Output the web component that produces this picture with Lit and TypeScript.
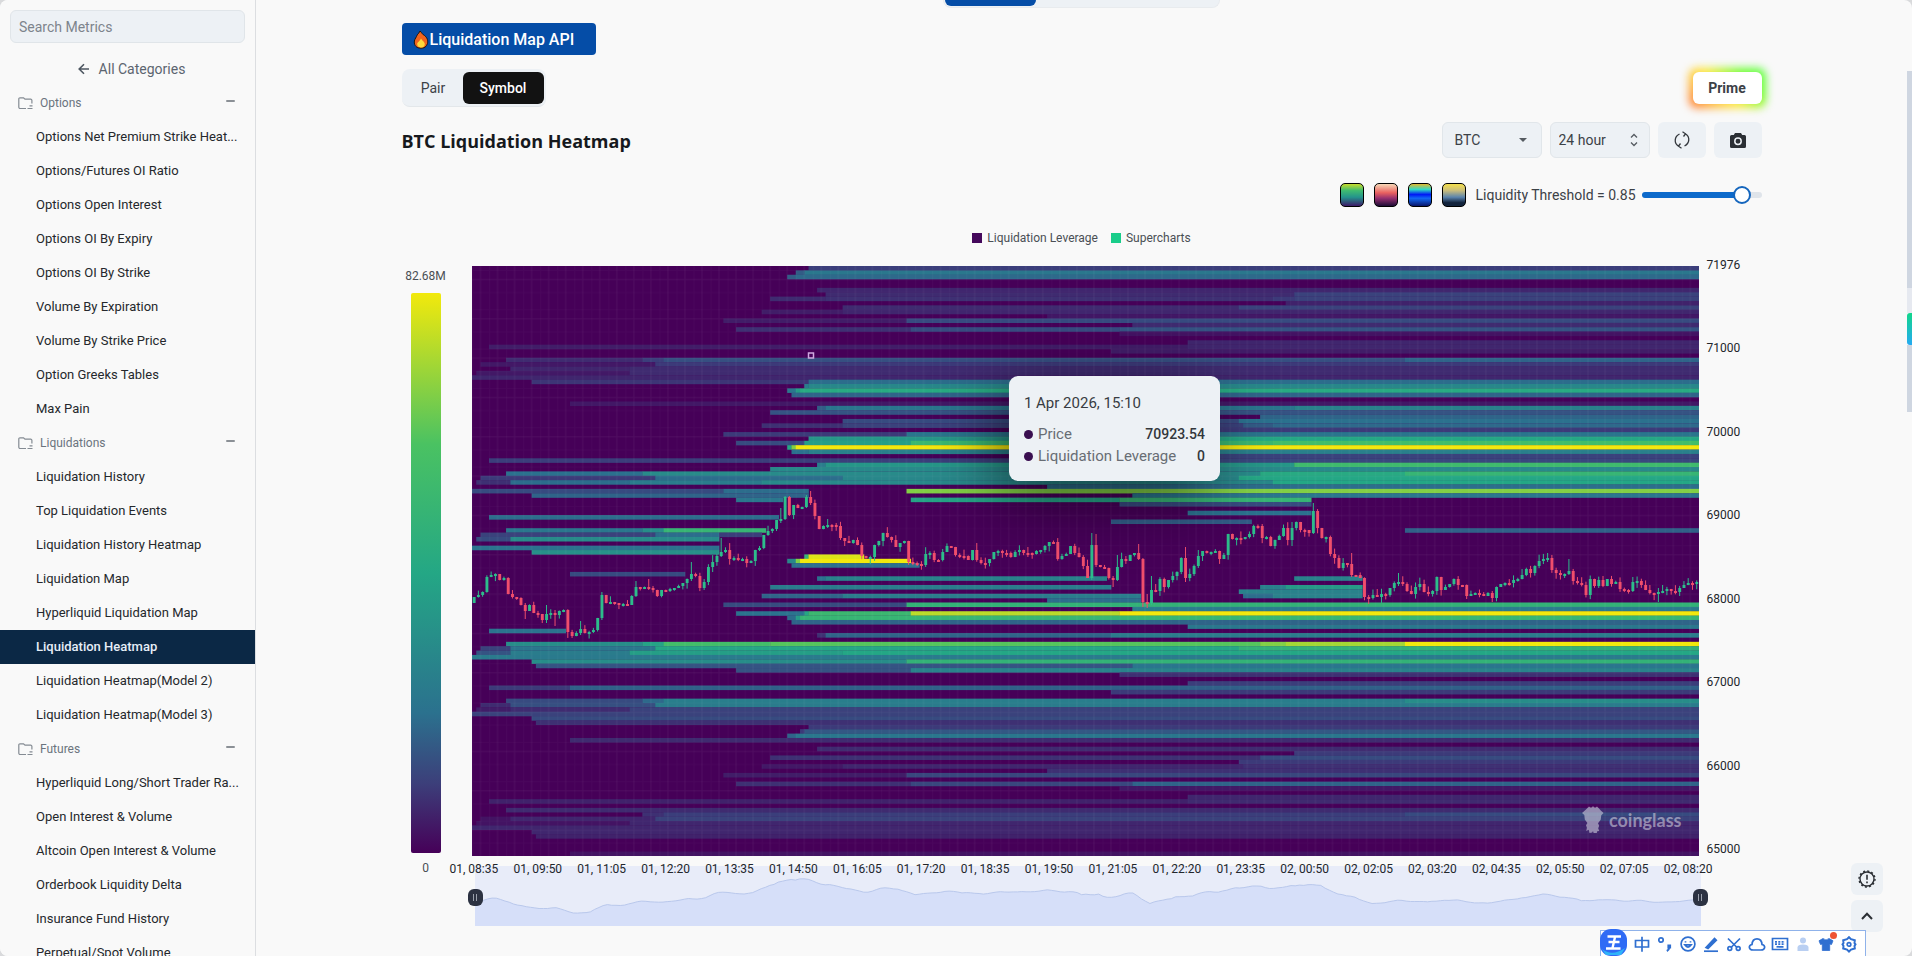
import { LitElement, html, svg, css } from 'lit';
import { customElement, property, state } from 'lit/decorators.js';
import { classMap } from 'lit/directives/class-map.js';

const COLS = 288;
const CELL_W = 4.26;
const CELL_H = 4.37;
const PLOT_W = 1227;
const PLOT_H = 590;

const SCALE: Array<[number, number[]]> = [
  [0, [70, 0, 88]],
  [12.5, [60, 60, 122]],
  [25, [43, 113, 142]],
  [50, [36, 167, 133]],
  [70, [74, 194, 98]],
  [100, [242, 233, 12]],
];

function heat(v: number): string {
  for (let i = 1; i < SCALE.length; i++) {
    const [hi, b] = SCALE[i];
    const [lo, a] = SCALE[i - 1];
    if (v <= hi) {
      const t = (v - lo) / (hi - lo);
      return `rgb(${a.map((n, k) => Math.round(n + (b[k] - n) * t)).join(',')})`;
    }
  }
  return 'rgb(242,233,12)';
}

/* One line per price row: "row: column value, column value"; a value lasts until the next column. */
const LEVELS = `
0: 79 13
1: 76 20, 78 28
2: 74 20, 76 23
5: 81 8
6: 83 9, 193 14
7: 70 9, 83 10, 188 12, 193 14
8: 191 7
9: 87 9, 180 14
10: 68 6, 87 8
11: 135 5
12: 59 6, 102 16
13: 155 9
14: 62 10, 103 16, 152 18
15: 152 4
17: 168 8
18: 4 6, 168 8
19: 150 6
21: 8 9, 40 13, 45 17, 219 22
22: 2 5, 43 12
23: 9 8, 37 9
24: 1 5, 37 9
25: 0 8
26: 14 11, 79 24
27: 78 30, 79 35
28: 74 28, 76 45, 77 52
29: 75 22
31: 23 5
32: 81 20, 83 27, 193 32
33: 70 18
34: 185 22
35: 87 16, 180 25
36: 68 10, 87 14, 181 20, 188 23
37: 135 12
38: 59 12, 102 27
39: 79 42, 135 50
40: 62 16, 78 46, 103 62, 188 66
41: 74 50, 75 80, 76 100
42: 75 25, 79 32
43: 150 14
44: 4 13, 150 15
45: 81 30, 83 42, 193 64
46: 70 36
47: 8 25, 40 37, 185 52, 219 60
48: 2 12, 43 24, 87 35, 180 50
49: 1 10, 9 24, 37 30, 68 36, 188 50
50: 135 24
51: 0 16, 59 24, 79 0, 102 80
52: 14 22, 79 0, 155 28
53: 62 28, 73 0, 103 48, 152 60, 197 0
54: 152 16, 197 0
56: 168 25, 197 0
57: 4 24, 72 0
58: 150 20, 183 0
60: 8 28, 40 38, 45 60, 69 0, 219 21
61: 2 14, 43 24, 58 13, 68 0
62: 1 16, 9 37, 58 0
64: 0 26, 58 0
65: 14 40, 58 0
66: 78 60, 79 96, 92 0
67: 74 35, 76 80, 77 100, 103 0
68: 75 25, 105 0
70: 23 16, 50 0
71: 81 25, 83 33, 149 0, 193 33, 209 0
73: 70 30, 150 0, 185 32, 191 44, 209 0
74: 180 33, 209 0
75: 68 22, 87 30, 157 0, 181 24, 188 33, 209 0
76: 135 24, 157 0
77: 59 16, 102 58
78: 155 30
79: 62 26, 78 50, 79 62, 103 90, 152 100
80: 74 24, 76 45, 77 60
81: 75 22
82: 168 28
83: 4 26, 22 0
84: 81 10, 83 22, 150 30
86: 8 38, 40 48, 45 66, 70 72, 185 80, 191 86, 219 100
87: 2 14, 9 28, 43 50, 180 58
88: 1 18, 9 30, 37 46, 87 50
89: 0 29
90: 14 38, 102 58
91: 15 18, 155 27
92: 62 18, 103 33
93: 152 10
95: 168 13
96: 4 12, 23 21
97: 150 12
99: 8 16, 40 23, 45 31, 219 38
100: 2 9, 9 17, 43 30
101: 1 6, 9 9, 37 14
102: 0 14
103: 14 16
104: 15 10
105: 79 12
106: 77 12, 78 19
107: 74 22, 76 28
108: 23 9
110: 81 9
111: 193 12
112: 70 10, 185 16
113: 180 12
114: 68 5, 87 8, 181 10
115: 135 10
116: 59 6, 102 15
118: 62 10, 103 15, 155 22
119: 152 5
121: 168 8
122: 4 7, 168 9
124: 8 9
125: 40 10, 45 13, 219 16
126: 2 4, 9 8, 43 14
127: 1 4, 37 8
128: 0 8
129: 14 8
130: 15 7
134: 23 4`;

const BANDS = LEVELS.trim().split('\n').flatMap((line) => {
  const [row, rest] = line.split(':');
  const stops = rest.split(',').map((p) => p.trim().split(' ').map(Number));
  return stops
    .map(([col, value], i) => ({ row: Number(row), col, value, end: i + 1 < stops.length ? stops[i + 1][0] : COLS }))
    .filter((b) => b.value > 0);
});

const CLOSES = [
  331, 329, 326, 311, 309, 308, 314, 312, 328, 331, 332, 339, 345, 339, 347, 348, 354, 348, 347, 349, 345, 344, 366, 370, 367,
  363, 367, 366, 364, 352, 329, 337, 336, 337, 339, 338, 339, 330, 321, 323, 321, 322, 324, 330, 324, 325, 323, 322, 320, 317,
  313, 308, 310, 322, 316, 301, 296, 290, 286, 284, 293, 292, 294, 293, 297, 295, 284, 282, 269, 265, 263, 254, 253, 231, 249,
  239, 242, 241, 231, 237, 250, 263, 260, 259, 259, 260, 272, 275, 277, 274, 279, 290, 292, 291, 279, 275, 267, 271, 274, 281,
  277, 275, 296, 297, 298, 299, 288, 287, 294, 294, 286, 280, 281, 289, 290, 290, 294, 284, 294, 297, 297, 293, 286, 285, 287,
  287, 291, 286, 284, 287, 287, 288, 285, 284, 280, 276, 276, 293, 290, 288, 280, 287, 291, 300, 312, 279, 299, 301, 302, 312,
  314, 301, 293, 295, 289, 287, 293, 336, 337, 324, 325, 313, 321, 314, 310, 306, 292, 312, 308, 300, 290, 285, 287, 286, 285,
  293, 289, 268, 273, 272, 273, 271, 268, 260, 260, 272, 271, 280, 274, 270, 262, 274, 262, 256, 264, 264, 267, 245, 262, 272,
  271, 288, 292, 302, 297, 298, 309, 309, 312, 331, 332, 329, 331, 328, 329, 322, 317, 316, 318, 325, 328, 321, 318, 326, 328,
  325, 311, 324, 321, 318, 313, 319, 319, 330, 328, 327, 328, 330, 327, 332, 321, 318, 317, 317, 314, 313, 309, 303, 307, 300,
  295, 293, 292, 304, 307, 309, 308, 305, 315, 317, 319, 329, 313, 320, 314, 320, 313, 318, 316, 323, 324, 325, 316, 315, 319,
  324, 327, 327, 326, 325, 323, 325, 326, 322, 319, 317, 317, 316,
];

/* Long wicks: index -> [above the body, below the body]. */
const SPIKES: Record<number, [number, number]> = {
  12: [2, 8], 17: [9, 3], 19: [3, 11], 25: [8, 2], 30: [3, 2], 38: [6, 1], 41: [8, 1], 51: [12, 2], 58: [14, 1], 67: [2, 1],
  72: [11, 2], 73: [1, 1], 74: [1, 1], 78: [2, 1], 79: [6, 2], 83: [6, 1], 145: [12, 2], 146: [11, 2], 151: [12, 1], 156: [9, 1],
  157: [1, 5], 158: [8, 4], 159: [14, 2], 167: [11, 4], 170: [6, 2], 197: [8, 1], 206: [11, 2], 210: [2, 5], 217: [9, 2],
  239: [2, 4], 252: [5, 2], 257: [12, 1], 272: [5, 1], 278: [4, 8], 150: [2, 7], 192: [6, 6], 54: [3, 2],
};

const CANDLES = CLOSES.map((close, i) => {
  const open = i ? CLOSES[i - 1] : 337;
  const top = Math.min(open, close);
  const bottom = Math.max(open, close, top + 2);
  const noise = (k: number) => Math.abs(Math.sin(i * k) * 43758.5) % 1;
  const [up, down] = SPIKES[i] ?? [noise(12.9) ** 2 * 7, noise(78.2) ** 2 * 6];
  return { x: i * CELL_W, top, bottom, up, down, rise: close < open };
});

const AREA = (() => {
  const pts = CLOSES.map((_, i) => {
    const win = CLOSES.slice(Math.max(0, i - 1), i + 3);
    const mean = win.reduce((a, b) => a + b, 0) / win.length;
    return `${(i * 1226) / 287},${(11 + (mean - 231) * 0.266).toFixed(1)}`;
  });
  return pts.join(' L');
})();

const PRICES = ['71976', '71000', '70000', '69000', '68000', '67000', '66000', '65000'];
const TIMES = [
  '01, 08:35', '01, 09:50', '01, 11:05', '01, 12:20', '01, 13:35', '01, 14:50', '01, 16:05', '01, 17:20', '01, 18:35', '01, 19:50',
  '01, 21:05', '01, 22:20', '01, 23:35', '02, 00:50', '02, 02:05', '02, 03:20', '02, 04:35', '02, 05:50', '02, 07:05', '02, 08:20',
];

const GROUPS = [
  {
    name: 'Options',
    items: [
      'Options Net Premium Strike Heat...', 'Options/Futures OI Ratio', 'Options Open Interest', 'Options OI By Expiry',
      'Options OI By Strike', 'Volume By Expiration', 'Volume By Strike Price', 'Option Greeks Tables', 'Max Pain',
    ],
  },
  {
    name: 'Liquidations',
    items: [
      'Liquidation History', 'Top Liquidation Events', 'Liquidation History Heatmap', 'Liquidation Map',
      'Hyperliquid Liquidation Map', 'Liquidation Heatmap', 'Liquidation Heatmap(Model 2)', 'Liquidation Heatmap(Model 3)',
    ],
  },
  {
    name: 'Futures',
    items: [
      'Hyperliquid Long/Short Trader Ra...', 'Open Interest & Volume', 'Altcoin Open Interest & Volume', 'Orderbook Liquidity Delta',
      'Insurance Fund History', 'Perpetual/Spot Volume',
    ],
  },
];

const base = css`
  * { box-sizing: border-box; }
  button, input, select { font: inherit; color: inherit; margin: 0; }
  button { border: 0; padding: 0; background: none; cursor: pointer; }
  a { color: inherit; text-decoration: none; }
  svg { display: block; }
`;

@customElement('metric-sidebar')
export class MetricSidebar extends LitElement {
  @property() active = '';

  static styles = [base, css`
    :host { display: block; padding-top: 10px; background: #f9f9f9; border-right: 1px solid #dcdee1; overflow: hidden; color: #25282c; font-size: 13px; }
    .search { display: block; width: calc(100% - 20px); height: 33px; margin: 0 10px 9px; padding: 0 8px; border: 1px solid #e0e5e9; border-radius: 6px; background: #edf1f5; font-size: 14px; }
    .search::placeholder { color: #7d848c; opacity: 1; }
    .all { display: flex; align-items: center; justify-content: center; gap: 9px; width: 100%; height: 34px; padding-left: 8px; color: #5c6570; font-size: 14px; }
    .group { display: flex; align-items: center; gap: 7px; width: 100%; height: 34px; padding: 0 20px 0 18px; color: #6b747e; font-size: 12px; text-align: left; }
    .group span { flex: 1; }
    .list { margin: 0; padding: 0; list-style: none; }
    .link { display: block; height: 34px; padding: 0 12px 0 36px; line-height: 34px; white-space: nowrap; overflow: hidden; }
    .active { background: #0b2845; color: #e6eef8; font-weight: 500; }
  `];

  render() {
    return html`
      <input class="search" type="search" placeholder="Search Metrics" aria-label="Search Metrics" />
      <button class="all">
        <svg width="12" height="12" viewBox="0 0 12 12" fill="none" stroke="#4d5660" stroke-width="1.6"><path d="M11 6H1.5M6 1.2 1.2 6 6 10.8" /></svg>
        All Categories
      </button>
      ${GROUPS.map((g) => html`
        <button class="group">
          <svg width="15" height="13" viewBox="0 0 15 13" fill="none" stroke="#848b93" stroke-width="1.2"><path d="M8 11.5H2.200A1.400 1.400 0 0 1 .8 10V2A1.200 1.200 0 0 1 2 .8h3.500L7 2.200h5.700A1.200 1.200 0 0 1 13.900 3.400V6.500M11.500 8.800H14.500M9.500 11.500H14.500" /></svg>
          <span>${g.name}</span>
          <svg width="10" height="8" viewBox="0 0 10 8"><rect x="1" y="1" width="9" height="2" rx="1" fill="#8b9096" /></svg>
        </button>
        <ul class="list">
          ${g.items.map((t) => html`<li><a href="#" class=${classMap({ link: true, active: t === this.active })}>${t}</a></li>`)}
        </ul>`)}
    `;
  }
}

@customElement('heatmap-chart')
export class HeatmapChart extends LitElement {
  static styles = [base, css`
    :host { display: block; color: #22262b; font-size: 12px; }
    .legend { display: flex; justify-content: center; gap: 13px; height: 16px; line-height: 16px; color: #4a4f55; }
    .key { display: flex; align-items: center; gap: 5px; }
    .swatch { width: 10px; height: 10px; background: #45095c; }
    .swatch.green { background: #19cd8a; }
    .grid { display: grid; grid-template-columns: 70px minmax(0, 1fr) 63px; margin-top: 20px; }
    .scale { display: flex; flex-direction: column; align-items: center; grid-row: 1 / 3; padding: 2px 22px 0 0; color: #4a4f55; line-height: 16px; }
    .bar { width: 30px; height: 560px; margin: 9px 0 7px; border-radius: 2px; background: linear-gradient(to top, #460058, #3c3f7a 12.5%, #2b718e 25%, #24a785 50%, #4ac262 73%, #f2e90c); }
    .plot { position: relative; height: 590px; background: #460058; }
    .canvas { width: 100%; height: 100%; }
    .prices { display: flex; flex-direction: column; justify-content: space-between; height: 600px; margin-top: -9px; padding-left: 8px; line-height: 16px; grid-row: 1 / 3; grid-column: 3; }
    .range { display: grid; grid-column: 2; margin: 10px -2px 0 3px; height: 60px; }
    .area, .times, .handles { grid-area: 1 / 1; }
    .area { width: 100%; height: 60px; }
    .times { display: flex; justify-content: space-between; margin: -5px -12px 0 -25px; height: 16px; line-height: 16px; white-space: nowrap; z-index: 1; }
    .handles { display: flex; justify-content: space-between; align-items: flex-end; margin: 0 -7px 20px; }
    .handle { display: flex; align-items: center; justify-content: center; gap: 2px; width: 15px; height: 17px; border-radius: 6px; background: #2c3242; }
    .handle::before, .handle::after { content: ''; width: 1px; height: 7px; background: #9ba1ad; }
    .tip { position: absolute; left: 43.8%; top: 110px; width: 211px; height: 105px; padding: 17px 15px; border-radius: 9px; background: #edf1f5; box-shadow: -12px 16px 64px rgba(0, 0, 0, 0.55); color: #383c42; font-size: 15px; line-height: 22px; }
    .when { margin-bottom: 10px; line-height: 20px; }
    .row { display: flex; align-items: center; gap: 5px; color: #686d74; }
    .row b { margin-left: auto; color: #33373c; font-size: 14px; font-weight: 500; }
    .dot { width: 9px; height: 9px; border-radius: 50%; background: #3a0f50; }
    .mark { position: absolute; right: 17px; bottom: 23px; display: flex; align-items: center; gap: 5px; color: rgba(205, 205, 220, 0.6); font: 700 18px/26px Lato, sans-serif; }
  `];

  render() {
    return html`
      <div class="legend">
        <span class="key"><i class="swatch"></i>Liquidation Leverage</span>
        <span class="key"><i class="swatch green"></i>Supercharts</span>
      </div>
      <div class="grid">
        <div class="scale"><span>82.68M</span><div class="bar"></div><span>0</span></div>
        <div class="plot">
          <svg class="canvas" viewBox="0 0 ${PLOT_W} ${PLOT_H}" preserveAspectRatio="none" role="img" aria-label="BTC Liquidation Heatmap">
            <defs>
              <pattern id="cells" width="17.040" height="39.330" patternUnits="userSpaceOnUse">
                <path d="M8.500 0V39.330M0 13.500H17.040" stroke="#fff" stroke-opacity=".05" />
                <path d="M0.500 0V39.330M0 4.500H17.040M0 26.500H17.040" stroke="#fff" stroke-opacity=".025" />
              </pattern>
            </defs>
            ${BANDS.map((b) => svg`<rect x=${b.col * CELL_W} y=${b.row * CELL_H} width=${(b.end - b.col) * CELL_W + 0.3} height=${CELL_H + 0.2} fill=${heat(b.value)} />`)}
            <rect width=${PLOT_W} height=${PLOT_H} fill="url(#cells)" />
            ${CANDLES.map((c) => svg`
              <path d="M${c.x + 2.1} ${c.top - c.up}V${c.bottom + c.down}" stroke=${c.rise ? '#2dbd8b' : '#f04e6c'} stroke-width="1" />
              <rect x=${c.x + 0.7} y=${c.top} width="2.9" height=${c.bottom - c.top} fill=${c.rise ? '#2dbd8b' : '#f04e6c'} />`)}
            <rect x="336.500" y="87" width="5" height="5" fill="none" stroke="#cfa8e0" stroke-width="1.500" />
          </svg>
          <div class="mark">
            <svg width="22" height="27" viewBox="0 0 22 27" fill="currentColor"><path d="M5 2.500 7 .5l2 1.200L11 .3l2 1.400 2-1.200 2 2 2 2.300 2.600 2.200-2.300 2.200-.6 4.500-2.700 3.600 1.200 2.500-1 2.400 1 2.800-2 .3-.8 3.200-2.600-.8L11 25l-.8 1.500-2.700.5-.8-3.200-2.500 1.200.7-3.200-.9-2.600 1.400-2.200L2.800 13.500 2.300 9 0 7l2.600-2.200z" /></svg>
            <span>coinglass</span>
          </div>
          <div class="tip" role="tooltip">
            <div class="when">1 Apr 2026, 15:10</div>
            <div class="row"><i class="dot"></i>Price<b>70923.54</b></div>
            <div class="row"><i class="dot"></i>Liquidation Leverage<b>0</b></div>
          </div>
        </div>
        <div class="prices">${PRICES.map((p) => html`<span>${p}</span>`)}</div>
        <div class="range">
          <svg class="area" viewBox="0 0 1226 60" preserveAspectRatio="none">
            <rect width="1226" height="60" fill="#e8ecf9" />
            <path d="M${AREA} V60 H0 Z" fill="#d6dff9" />
            <path d="M${AREA}" fill="none" stroke="#b9c8ec" />
          </svg>
          <div class="handles"><i class="handle"></i><i class="handle"></i></div>
          <div class="times">${TIMES.map((t) => html`<span>${t}</span>`)}</div>
        </div>
      </div>
    `;
  }
}

const IME_ICONS = [
  svg`<path d="M1.500 4.500h13v6.500H1.500zM8 .8v15" />`,
  svg`<circle cx="4" cy="4" r="2.200" /><path d="M12 10.500v1.500q0 2-2.200 3M11.500 9.500h1.500v2h-1.500z" stroke-width="2.200" />`,
  svg`<circle cx="8" cy="8" r="6.900" /><path d="M4.800 8.800q3.200 4.500 6.400 0zM5.500 5.300v1.200M10.500 5.300v1.200" />`,
  svg`<path d="M3 11.500 11.500 2.500l1.800 1.800L5 12.500z" fill="currentColor" /><path d="M1 15.200h14" />`,
  svg`<path d="M2 2.500 11 11.500M14 2.500 5 11.500" /><circle cx="3.800" cy="12.500" r="1.900" /><circle cx="12.200" cy="12.500" r="1.900" />`,
  svg`<path d="M4 14C-.3 14-1 9.500 3 8.500 3.500 1 12.500 1 13 8.500 17 9.500 16.300 14 12 14z" />`,
  svg`<path d="M.5 2.500h15v11H.5z" /><path d="M3 5.800h10M3 8.200h10" stroke-dasharray="2 1.300" /><path d="M4.500 10.800h7" />`,
  svg`<g fill="#b9cff2" stroke="none"><circle cx="8" cy="4.500" r="3" /><path d="M2.500 15V11.500Q2.500 8.500 8 8.500t5.500 3V15z" /></g>`,
  svg`<path d="M5 2.500 1 4.800 2.500 8.500 4.300 8V14.500h7.400V8l1.800.5L15 4.800 11 2.500Q8 5.500 5 2.500z" fill="currentColor" stroke-width=".8" />`,
  svg`<path d="M8 1.200 10 3.200 13.800 4.300 13.500 7 14.500 8.400 13.500 10 13.800 12.500 10 13.600 8 15.600 6 13.600 2.200 12.500 2.500 10 1.500 8.400 2.500 7 2.200 4.300 6 3.200z" stroke-width="2" /><circle cx="8" cy="8.400" r="1.800" />`,
];

@customElement('app-root')
export class AppRoot extends LitElement {
  @state() private threshold = 0.85;

  static styles = [base, css`
    :host { display: block; height: 100vh; background: #d9dadc; color: #3c4147; font-family: Roboto, "Liberation Sans", sans-serif; overflow: hidden; }
    .shell { position: relative; display: grid; grid-template-columns: 256px minmax(0, 1fr) 5px; height: 100%; border-radius: 8px; background: #f9f9f9; overflow: hidden; }
    .main { padding: 0 24px; overflow: hidden; }
    .page { max-width: 1360px; margin: 0 auto; }
    .strip { width: 277px; height: 8px; margin: 0 auto; padding: 0 1px; border: 1px solid #e8ebee; border-top: 0; border-radius: 0 0 8px 8px; background: #edf1f5; }
    .tab { display: block; width: 91px; height: 6px; border-radius: 0 0 6px 6px; background: #054da7; }
    .api { display: flex; align-items: center; width: 194px; height: 32px; margin-top: 15px; padding-left: 11px; gap: 1px; border-radius: 4px; background: #054da7; color: #fff; font-size: 16px; font-weight: 500; }
    .bar { display: flex; align-items: center; justify-content: space-between; }
    .modes { position: relative; z-index: 0; margin-top: 14px; }
    .segment { display: flex; align-items: center; height: 38px; padding: 0 2px; border-radius: 8px; background: #edf1f5; border-bottom: 1px solid #e3e7ea; font-size: 14px; }
    .seg { width: 59px; height: 32px; }
    .seg.on { width: 81px; border-radius: 6px; background: #121212; color: #fff; font-weight: 500; }
    .prime { width: 69px; height: 32px; border-radius: 6px; background: #fff; font-size: 14px; font-weight: 700; position: relative; }
    .prime::before { content: ''; position: absolute; inset: -4px; z-index: -1; border-radius: 8px; background: linear-gradient(45deg, #ff6a2c, #ffc83a 30%, #ffe93a 45%, #6bff2c 75%, #5dff4a); filter: blur(4px); }
    .head { margin-top: 15px; }
    h1 { margin: 0; padding-top: 2px; color: #16191d; font: 700 18px/34px "Open Sans", "Noto Sans", sans-serif; }
    .tools { display: flex; gap: 8px; font-size: 14px; }
    .pick { display: grid; width: 100px; height: 36px; align-items: center; }
    .pick select { grid-area: 1 / 1; width: 100%; height: 100%; padding: 0 12px; border: 1px solid #e1e6ea; border-radius: 6px; background: #edf1f5; appearance: none; }
    .pick .narrow { padding: 0 8px; }
    .pick svg { grid-area: 1 / 1; justify-self: end; margin-right: 12px; pointer-events: none; }
    .square { display: flex; align-items: center; justify-content: center; width: 48px; height: 36px; border-radius: 6px; background: #edf1f5; }
    .options { display: flex; align-items: center; justify-content: flex-end; gap: 10px; height: 24px; margin-top: 25px; font-size: 14px; }
    .theme { width: 24px; height: 24px; border: 1px solid #000; border-radius: 5px; }
    .viridis { background: linear-gradient(#c9dc2c, #3fbb70 30%, #24948c 60%, #3d1a68); }
    .magma { background: linear-gradient(#f7d9b8, #e9605f 40%, #96306f 65%, #1d0c35); }
    .jet { background: linear-gradient(#e6b92e, #2fd9c8 25%, #0018f5 48%, #1168f5 65%, #08156a); }
    .cividis { background: linear-gradient(#f5e04c, #c9bd7c 30%, #5b84ad 60%, #12233c 85%); }
    .track { width: 120px; height: 6px; border-radius: 3px; margin-left: -4px; background: linear-gradient(to right, #0d6acb 85%, #dfe4ea 85%); }
    .slide { display: block; width: 136px; height: 18px; margin: -6px -9px; appearance: none; background: none; }
    .slide::-webkit-slider-thumb { appearance: none; width: 18px; height: 18px; border: 2px solid #1566bd; border-radius: 50%; background: #fff; }
    heatmap-chart { margin-top: 23px; }
    .rail { display: flex; flex-direction: column; }
    .thumb { margin-top: 71px; height: 242px; background: linear-gradient(#cfd6e1 217px, #e6e9f0 217px); }
    .widget { height: 32px; border-radius: 3px 0 0 3px; background: linear-gradient(#12d68a, #25aaf2); }
    .thumb-end { height: 67px; background: #cfd6e1; }
    .float { position: absolute; right: 29px; bottom: 24px; display: grid; gap: 5px; }
    .float button { display: flex; align-items: center; justify-content: center; width: 32px; height: 32px; border-radius: 6px; background: #edf1f5; }
    .ime { position: absolute; right: 46px; bottom: 0; display: flex; align-items: center; gap: 7px; height: 26px; padding: 0 8px 0 33px; border: 1px solid #8fb2ea; border-bottom: 0; background: #fff; color: #2f6fd0; }
    .ime svg { overflow: visible; }
    .ime-logo { position: absolute; left: -1px; bottom: 0; }
    .dot { position: absolute; right: 28px; top: 1px; width: 7px; height: 7px; border-radius: 50%; background: #ee5433; }
  `];

  render() {
    return html`
      <div class="shell">
        <metric-sidebar active="Liquidation Heatmap"></metric-sidebar>
        <main class="main">
          <div class="page">
            <div class="strip"><i class="tab"></i></div>
            <a class="api" href="#">
              <svg width="16" height="19" viewBox="0 0 16 19"><path d="M7 1C9 3 9.500 4.500 11.500 5.500 14.500 8 15 10.500 14.500 13.500 13.500 17 11 18.200 8 18.200S2 17 1.300 13C1 10 2.500 8.500 3.500 6.500 4 5.500 4.500 4 5.500 3.500z" fill="#f0641e" stroke="#1a1410" /><path d="M8 8.500C9 11 12 11.500 11.800 14.500 11.500 17 9.500 17.500 8 17.500S4.300 16.800 4.200 14C4.200 12 6.800 11.500 8 8.500z" fill="#ffd93b" /></svg>
              <span>Liquidation Map API</span>
            </a>
            <div class="bar modes">
              <div class="segment"><button class="seg">Pair</button><button class="seg on">Symbol</button></div>
              <button class="prime">Prime</button>
            </div>
            <div class="bar head">
              <h1>BTC Liquidation Heatmap</h1>
              <div class="tools">
                <div class="pick">
                  <select aria-label="Coin"><option>BTC</option></select>
                  <svg width="14" height="6" viewBox="0 0 14 6"><path d="M3 1h8L7 5z" fill="#555b61" /></svg>
                </div>
                <div class="pick">
                  <select class="narrow" aria-label="Time range"><option>24 hour</option></select>
                  <svg width="8" height="14" viewBox="0 0 8 14" fill="none" stroke="#555b61" stroke-width="1.300"><path d="M1 4.500 4 1.500 7 4.500M1 9.500 4 12.500 7 9.500" /></svg>
                </div>
                <button class="square" aria-label="Refresh">
                  <svg width="16" height="18" viewBox="0 0 16 18" fill="none" stroke="#33373c" stroke-width="1.300"><path d="M5.500 3C.3 5.500-.3 12 4.500 15.200M10.500 15C15.700 12.500 16.300 6 11.500 2.800M8.500 .8 11.500 2.800 9.500 5.500M7.500 17.200 4.500 15.200 6.500 12.500" /></svg>
                </button>
                <button class="square" aria-label="Screenshot">
                  <svg width="16" height="15" viewBox="0 0 16 15"><path d="M5 0h6l1.200 2H14.500A1.500 1.500 0 0 1 16 3.500v10A1.500 1.500 0 0 1 14.500 15h-13A1.500 1.500 0 0 1 0 13.500v-10A1.500 1.500 0 0 1 1.500 2H3.800z" fill="#2b2f34" /><circle cx="8" cy="8.300" r="3.200" fill="none" stroke="#edf1f5" stroke-width="1.500" /></svg>
                </button>
              </div>
            </div>
            <div class="options">
              <button class="theme viridis" aria-label="Viridis"></button>
              <button class="theme magma" aria-label="Magma"></button>
              <button class="theme jet" aria-label="Jet"></button>
              <button class="theme cividis" aria-label="Cividis"></button>
              <label for="threshold">Liquidity Threshold = ${this.threshold}</label>
              <div class="track">
                <input class="slide" id="threshold" type="range" min="0" max="1" step="0.01" .value=${String(this.threshold)}
                  @input=${(e: Event) => { this.threshold = Number((e.target as HTMLInputElement).value); }} />
              </div>
            </div>
            <heatmap-chart></heatmap-chart>
          </div>
        </main>
        <div class="rail"><i class="thumb"></i><i class="widget"></i><i class="thumb-end"></i></div>
        <div class="float">
          <button aria-label="Feedback">
            <svg width="18" height="18" viewBox="0 0 18 18" fill="none" stroke="#2b2f34" stroke-width="1.400"><circle cx="9" cy="9" r="7" /><circle cx="9" cy="9" r="8" stroke-dasharray="2 2.190" /><path d="M9 4.800v5M9 11.500v1.700" stroke-width="1.600" /></svg>
          </button>
          <button aria-label="Back to top">
            <svg width="12" height="8" viewBox="0 0 12 8" fill="none" stroke="#2b2f34" stroke-width="2"><path d="M1 7 6 1.800 11 7" /></svg>
          </button>
        </div>
        <div class="ime">
          ${IME_ICONS.map((i) => html`<svg width="16" height="16" viewBox="0 0 16 16" fill="none" stroke="currentColor" stroke-width="1.700">${i}</svg>`)}
          <svg class="ime-logo" width="27" height="27" viewBox="0 0 27 27"><rect width="27" height="27" rx="11" fill="#2f6bf5" /><path d="M2 20q10 8 23-1l-4 7H6z" fill="#2fb4f8" /><path d="M7.500 7.500H21M8.500 13H19.500M6 19.500H20.500M15 8 12.500 19" stroke="#fff" stroke-width="2.400" fill="none" /></svg>
          <i class="dot"></i>
        </div>
      </div>
    `;
  }
}
